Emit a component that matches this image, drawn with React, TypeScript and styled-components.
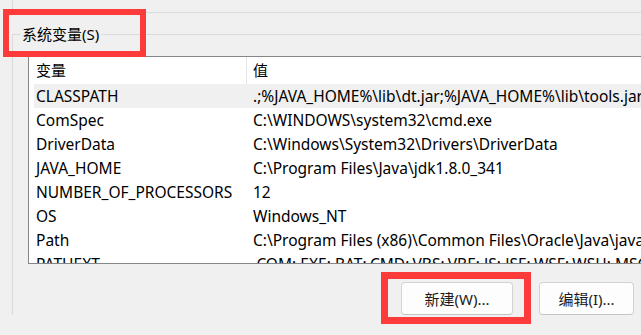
import React from 'react';
import styled, { createGlobalStyle } from 'styled-components';

const GlobalStyle = createGlobalStyle`
  html, body {
    margin: 0;
    padding: 0;
    background: #f0f0f0;
    overflow: hidden;
  }
  body {
    font-family: "Noto Sans", "Noto Sans CJK SC", sans-serif;
    color: #000;
  }
`;

const Page = styled.div`
  position: relative;
  width: 641px;
  height: 335px;
  overflow: hidden;
  background: #f0f0f0;
`;

// tail of the user-variables group above
const UpperGroupEnd = styled.div`
  margin-left: 12px;
  width: 800px;
  height: 12px;
  border-left: 1px solid #dadada;
  border-bottom: 1px solid #dadada;
`;

const Group = styled.fieldset`
  margin: 11px 0 0 12px;
  padding: 0 0 0 7px;
  width: 800px;
  min-width: 0;
  border: 1px solid #dadada;
  border-right: none;
  border-bottom: none;
`;

const GroupTitle = styled.legend`
  padding: 0 2px;
  font-size: 15px;
  line-height: 20px;
`;

const ListBox = styled.div`
  margin: 12px 0 0 8px;
  width: 760px;
  height: 208px;
  box-sizing: border-box;
  background: #fff;
  border: 1px solid #868686;
  border-right: none;
  overflow: hidden;
  font-size: 15.5px;
`;

const HeaderRow = styled.div`
  display: grid;
  grid-template-columns: 218px 1fr;
  height: 27px;
  line-height: 27px;
`;

const HeaderCell = styled.div<{ $divider?: boolean }>`
  box-sizing: border-box;
  padding-left: ${p => (p.$divider ? '7px' : '6px')};
  border-right: ${p => (p.$divider ? '1px solid #e5e5e5' : 'none')};
  font-size: 15px;
`;

const Row = styled.div<{ $selected?: boolean }>`
  display: grid;
  grid-template-columns: 213px 1fr;
  margin-left: 5px;
  height: 24px;
  line-height: 24px;
  background: ${p => (p.$selected ? '#f0f0f0' : 'transparent')};
  white-space: nowrap;
`;

const NameCell = styled.div`
  padding-left: 2px;
  overflow: hidden;
`;

const ValueCell = styled.div`
  padding-left: 6px;
  overflow: hidden;
`;

const ButtonRow = styled.div`
  display: flex;
  gap: 26px;
  margin: 18px 0 0 381px;
`;

const Button = styled.button<{ $width: number }>`
  width: ${p => p.$width}px;
  height: 33px;
  padding: 0;
  background: #fdfdfd;
  border: 1px solid #d3d3d3;
  border-bottom-color: #c4c4c4;
  border-radius: 4px;
  font-family: "Noto Sans", "Noto Sans CJK SC", sans-serif;
  font-size: 15px;
  color: #1b1b1b;
`;

const Highlight = styled.div<{ $x: number; $y: number; $w: number; $h: number; $t: number }>`
  position: absolute;
  left: ${p => p.$x}px;
  top: ${p => p.$y}px;
  width: ${p => p.$w}px;
  height: ${p => p.$h}px;
  box-sizing: border-box;
  border: ${p => p.$t}px solid #fd3b3b;
  pointer-events: none;
`;

const variables: [string, string][] = [
  ['CLASSPATH', '.;%JAVA_HOME%\\lib\\dt.jar;%JAVA_HOME%\\lib\\tools.jar'],
  ['ComSpec', 'C:\\WINDOWS\\system32\\cmd.exe'],
  ['DriverData', 'C:\\Windows\\System32\\Drivers\\DriverData'],
  ['JAVA_HOME', 'C:\\Program Files\\Java\\jdk1.8.0_341'],
  ['NUMBER_OF_PROCESSORS', '12'],
  ['OS', 'Windows_NT'],
  ['Path', 'C:\\Program Files (x86)\\Common Files\\Oracle\\Java\\javapath;C:\\WINDOWS\\system32'],
  ['PATHEXT', '.COM;.EXE;.BAT;.CMD;.VBS;.VBE;.JS;.JSE;.WSF;.WSH;.MSC'],
];

export default function App() {
  return (
    <Page>
      <GlobalStyle />
      <UpperGroupEnd />
      <Group>
        <GroupTitle>系统变量(S)</GroupTitle>
        <ListBox>
          <HeaderRow>
            <HeaderCell $divider>变量</HeaderCell>
            <HeaderCell>值</HeaderCell>
          </HeaderRow>
          {variables.map(([name, value], i) => (
            <Row key={name} $selected={i === 0}>
              <NameCell>{name}</NameCell>
              <ValueCell>{value}</ValueCell>
            </Row>
          ))}
        </ListBox>
        <ButtonRow>
          <Button $width={112}>新建(W)...</Button>
          <Button $width={95}>编辑(I)...</Button>
        </ButtonRow>
      </Group>
      <Highlight $x={3} $y={9} $w={143} $h={48} $t={6} />
      <Highlight $x={381} $y={272} $w={150} $h={52} $t={7} />
    </Page>
  );
}
